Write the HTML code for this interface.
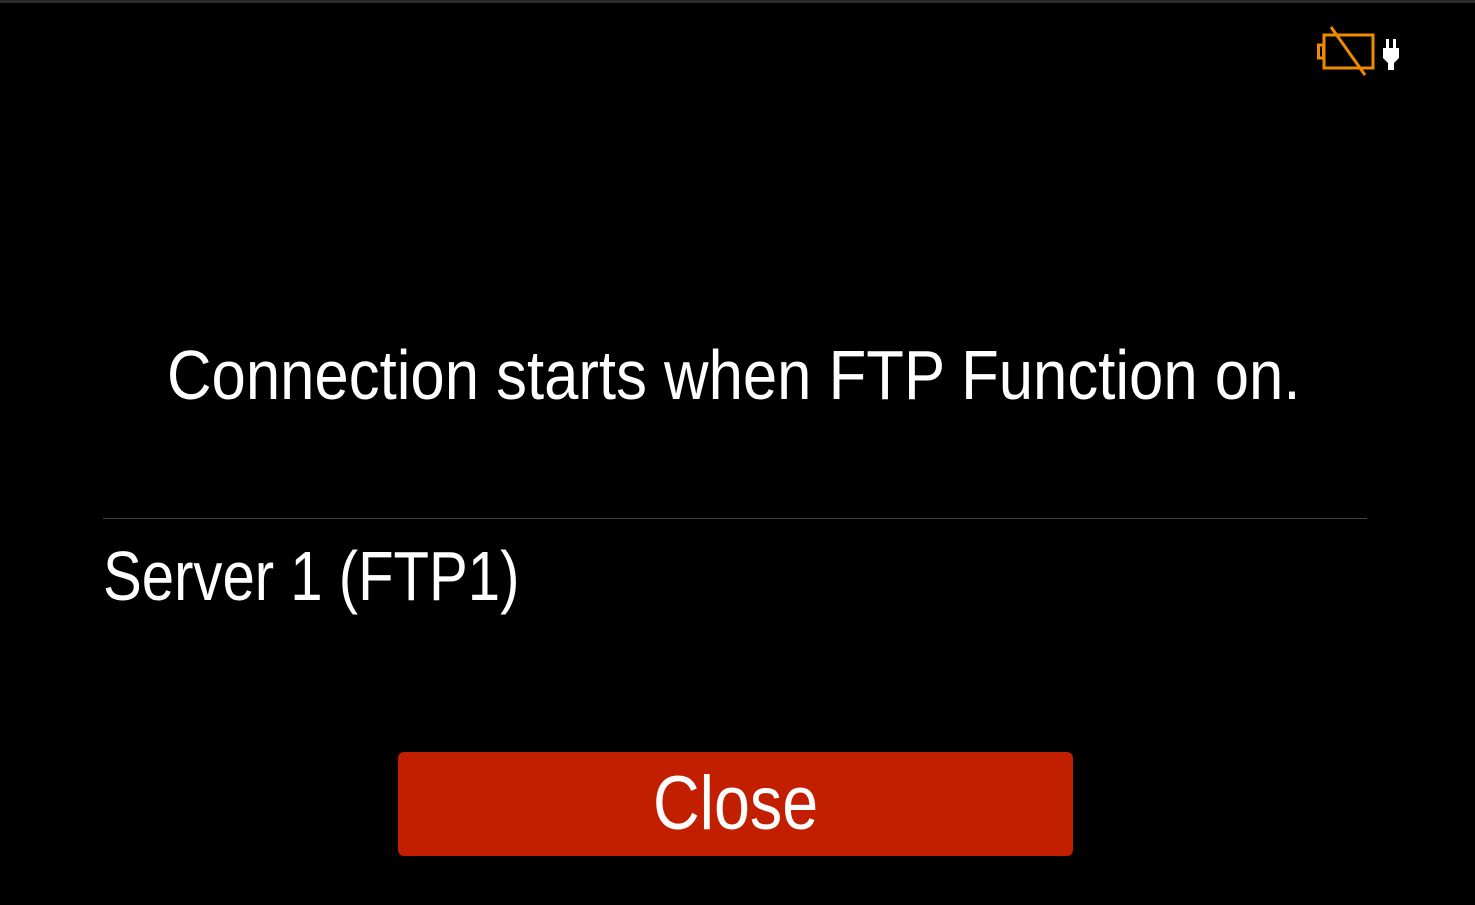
<!DOCTYPE html>
<html><head><meta charset="utf-8"><style>
html,body{margin:0;padding:0;background:#000;width:1475px;height:905px;overflow:hidden;font-family:"Liberation Sans",sans-serif;color:#fff}
.top{position:absolute;left:0;top:0;width:1475px;height:3px;background:#2a2a2a}
.t{position:absolute;white-space:nowrap;transform-origin:0 0;line-height:1}
.sep{position:absolute;left:103px;top:518px;width:1264px;height:1px;background:#444}
.btn{position:absolute;left:398px;top:752px;width:675px;height:104px;background:#c21e00;border-radius:6px}
</style></head><body>
<div class="top"></div>
<svg style="position:absolute;left:1310px;top:24px" width="100" height="55" viewBox="1310 24 100 55">
<rect x="1324" y="35" width="49" height="33" fill="none" stroke="#f08a00" stroke-width="3"/>
<rect x="1318.5" y="45" width="5" height="13" fill="none" stroke="#f08a00" stroke-width="3"/>
<line x1="1331" y1="27" x2="1365" y2="75" stroke="#f08a00" stroke-width="3"/>
<rect x="1386" y="39" width="3" height="9" fill="#fff"/>
<rect x="1393" y="39" width="3" height="9" fill="#fff"/>
<path d="M1383 48 H1399 V58 L1394 63 V70 H1388 V63 L1383 58 Z" fill="#fff"/>
</svg>
<div class="t" style="left:167px;top:340px;font-size:70px;transform:scaleX(0.881)">Connection starts when FTP Function on.</div>
<div class="sep"></div>
<div class="t" style="left:103px;top:541px;font-size:70px;transform:scaleX(0.83)">Server 1 (FTP1)</div>
<div class="btn"></div>
<div class="t" style="left:653px;top:766px;font-size:76px;transform:scaleX(0.85)">Close</div>
</body></html>
